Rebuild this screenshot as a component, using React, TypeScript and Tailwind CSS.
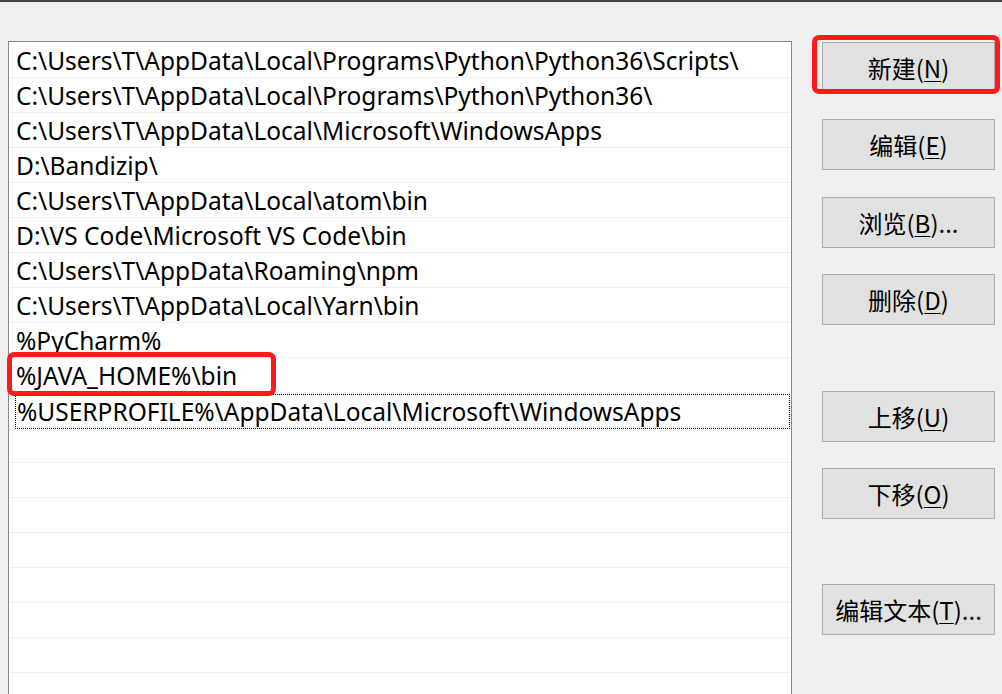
import React from "react";

const rows = [
  "C:\\Users\\T\\AppData\\Local\\Programs\\Python\\Python36\\Scripts\\",
  "C:\\Users\\T\\AppData\\Local\\Programs\\Python\\Python36\\",
  "C:\\Users\\T\\AppData\\Local\\Microsoft\\WindowsApps",
  "D:\\Bandizip\\",
  "C:\\Users\\T\\AppData\\Local\\atom\\bin",
  "D:\\VS Code\\Microsoft VS Code\\bin",
  "C:\\Users\\T\\AppData\\Roaming\\npm",
  "C:\\Users\\T\\AppData\\Local\\Yarn\\bin",
  "%PyCharm%",
  "%JAVA_HOME%\\bin",
  "%USERPROFILE%\\AppData\\Local\\Microsoft\\WindowsApps",
  "", "", "", "", "", "", "", "",
];

function Btn({ label, k, tail = "", highlight = false }: { label: string; k: string; tail?: string; highlight?: boolean }) {
  return (
    <div className="relative">
      <div className="h-[51px] w-[173px] border border-[#adadad] bg-[#e1e1e1] flex items-center justify-center text-[24px] text-black leading-none">
        <span>
          {label}(<span className="underline underline-offset-[3px] decoration-1">{k}</span>){tail}
        </span>
      </div>
      {highlight && (
        <div className="absolute top-[-7px] bottom-[-1px] left-[-10px] right-[-5px] border-[5px] border-[#ff1a1a] rounded-[7px]" />
      )}
    </div>
  );
}

export default function App() {
  return (
    <div
      className="w-[1002px] h-[694px] overflow-hidden bg-[#f0f0f0] flex flex-col"
      style={{ fontFamily: '"Noto Sans", "Noto Sans CJK SC", sans-serif' }}
    >
      <div className="h-[2px] bg-[#434343] shrink-0" />
      <div className="flex pt-[39px] pl-[8px] flex-1 min-h-0">
        <div className="relative w-[784px] border border-[#828790] bg-white p-[1px] pb-0 self-start">
          {rows.map((r, i) => (
            <div
              key={i}
              className={
                "h-[35px] border-b border-[#f0f0f0] flex items-center pt-[2px] text-[24.5px] text-black whitespace-nowrap " +
                (i === 10 ? "pl-[5px] pt-0" : "pl-[6px]")
              }
            >
              {i === 10 ? (
                <div className="h-[35px] w-full border border-dotted border-black flex items-center pl-[1px] pt-[2px]">{r}</div>
              ) : (
                r
              )}
            </div>
          ))}
          <div className="absolute left-[-2px] top-[310px] w-[269px] h-[44px] border-[5px] border-[#ff1a1a] rounded-[7px]" />
        </div>
        <div className="flex flex-col ml-[30px] pt-[1px]" style={{ fontFamily: '"Noto Sans CJK SC", sans-serif' }}>
          <Btn label="新建" k="N" highlight />
          <div className="h-[26px]" />
          <Btn label="编辑" k="E" />
          <div className="h-[27px]" />
          <Btn label="浏览" k="B" tail="..." />
          <div className="h-[26px]" />
          <Btn label="删除" k="D" />
          <div className="h-[66px]" />
          <Btn label="上移" k="U" />
          <div className="h-[26px]" />
          <Btn label="下移" k="O" />
          <div className="h-[65px]" />
          <Btn label="编辑文本" k="T" tail="..." />
        </div>
      </div>
    </div>
  );
}
